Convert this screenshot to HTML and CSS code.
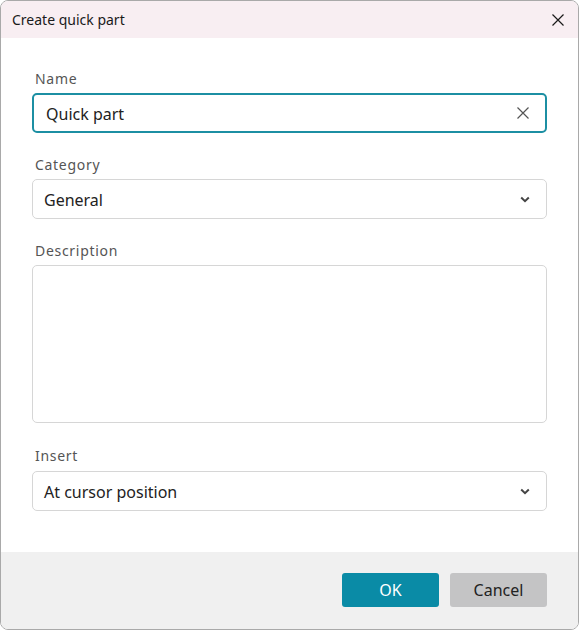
FILE: index.html
```html
<!DOCTYPE html>
<html lang="en">
<head>
<meta charset="utf-8">
<title>Create quick part</title>
<link rel="stylesheet" href="styles.css">
</head>
<body>
<div class="dialog">
  <header class="titlebar">
    <span class="title">Create quick part</span>
    <button class="close" aria-label="Close">
      <svg width="12" height="12" viewBox="0 0 12 12"><path d="M0.5 0.5L11.5 11.5M11.5 0.5L0.5 11.5" stroke="#1a1a1a" stroke-width="1.2" fill="none"/></svg>
    </button>
  </header>
  <main class="content">
    <div class="field">
      <label class="label">Name</label>
      <div class="control focused">
        <span class="value">Quick part</span>
        <svg class="clear" width="12" height="12" viewBox="0 0 12 12"><path d="M0.5 0.5L11.5 11.5M11.5 0.5L0.5 11.5" stroke="#555" stroke-width="1.2" fill="none"/></svg>
      </div>
    </div>
    <div class="field">
      <label class="label">Category</label>
      <div class="control select">
        <span class="value">General</span>
        <svg class="chev" width="10" height="7" viewBox="0 0 10 7"><path d="M1.2 1.5L5 5.2L8.8 1.5" stroke="#444" stroke-width="2" fill="none"/></svg>
      </div>
    </div>
    <div class="field">
      <label class="label">Description</label>
      <div class="control textarea"></div>
    </div>
    <div class="field insert">
      <label class="label">Insert</label>
      <div class="control select">
        <span class="value">At cursor position</span>
        <svg class="chev" width="10" height="7" viewBox="0 0 10 7"><path d="M1.2 1.5L5 5.2L8.8 1.5" stroke="#444" stroke-width="2" fill="none"/></svg>
      </div>
    </div>
  </main>
  <footer class="footer">
    <button class="btn primary">OK</button>
    <button class="btn secondary">Cancel</button>
  </footer>
</div>
</body>
</html>
```
FILE: styles.css
```css
* { box-sizing: border-box; }
html, body { margin: 0; padding: 0; background: #fff; }
body {
  width: 579px;
  height: 630px;
  font-family: "Noto Sans", "Open Sans", "Liberation Sans", sans-serif;
  color: #1f1f1f;
}
.dialog {
  width: 579px;
  height: 630px;
  border: 1px solid #a9a9a9;
  border-radius: 8px;
  overflow: hidden;
  display: flex;
  flex-direction: column;
  background: #fff;
}
.titlebar {
  height: 37px;
  background: #f8eef2;
  display: flex;
  align-items: center;
  justify-content: space-between;
  padding: 0 14px 0 11px;
  flex: none;
}
.title { font-size: 14px; color: #1a1a1a; }
.close {
  border: 0;
  background: none;
  padding: 0;
  width: 12px;
  height: 12px;
  display: flex;
}
.content {
  flex: 1;
  padding: 31px 31px 0 31px;
  display: flex;
  flex-direction: column;
  gap: 22px;
}
.field { display: flex; flex-direction: column; }
.field.insert { margin-top: 1px; }
.label {
  font-size: 14px;
  line-height: 20px;
  color: #555;
  letter-spacing: 0.7px;
  padding-left: 3px;
  margin-bottom: 4px;
}
.field.insert .label { margin-bottom: 5px; }
.control {
  height: 40px;
  border: 1px solid #d6d6d6;
  border-radius: 5px;
  display: flex;
  align-items: center;
  justify-content: space-between;
  padding: 0 16px 0 11px;
  background: #fff;
}
.control.focused {
  border: 2px solid #1c8fa3;
  padding: 0 16px 0 11px;
}
.control.focused .value { padding-left: 1px; }
.value { font-size: 16px; color: #222; padding-top: 2px; }
.control.textarea { height: 158px; }
.footer {
  height: 77px;
  flex: none;
  background: #f0f0f0;
  display: flex;
  justify-content: flex-end;
  align-items: flex-start;
  padding: 21px 31px 0 0;
  gap: 11px;
}
.btn {
  width: 97px;
  height: 34px;
  border: 0;
  border-radius: 3px;
  font-family: inherit;
  font-size: 16px;
  padding-top: 1px;
}
.primary { background: #0a8ba6; color: #fff; }
.secondary { background: #c4c4c5; color: #222; }
```
